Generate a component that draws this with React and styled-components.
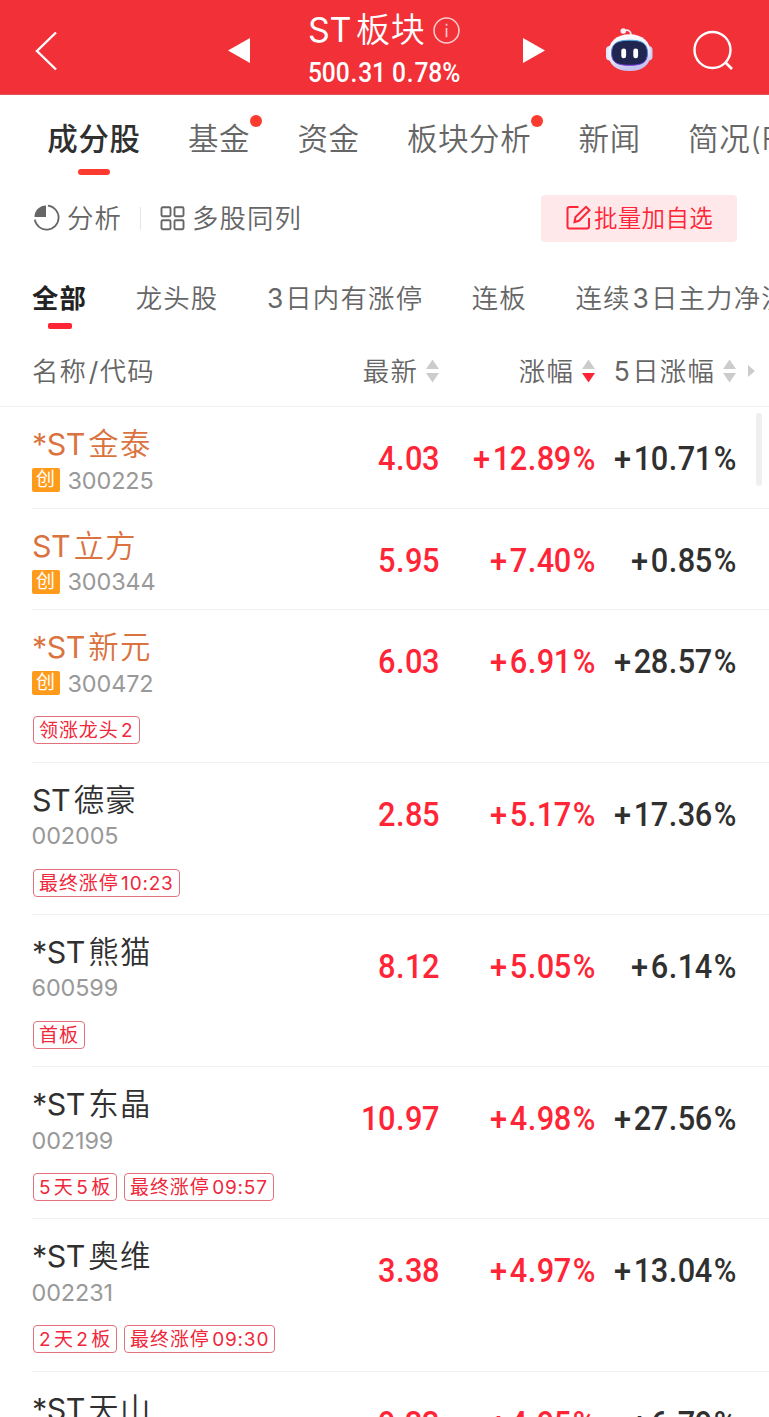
import React from 'react';
import styled, { createGlobalStyle, css } from 'styled-components';

const GlobalStyle = createGlobalStyle`
  * {
    box-sizing: border-box;
  }

  body {
    margin: 0;
    background: #fff;
  }
`;

const Page = styled.div`
  display: flex;
  flex-direction: column;
  width: 769px;
  height: 1417px;
  overflow: hidden;
  background: #fff;
  color: #666;
  font-family: Inter, 'Noto Sans CJK SC', sans-serif;
  font-weight: 350;
  white-space: nowrap;
`;

const Header = styled.header`
  display: grid;
  grid-template-columns: 228px 80px 153px 61px 84px 87px 1fr;
  align-items: center;
  flex: none;
  height: 95px;
  background: #f23038;
  border-bottom: 1px solid #d9565b;
  color: #fff;

  svg {
    display: block;
    overflow: visible;
  }
`;

const BackButton = styled.div`
  padding-left: 34px;
  padding-top: 7px;
`;

const IconSlot = styled.div`
  padding-top: ${({ $top }) => $top || 0}px;
`;

const TitleBlock = styled.div`
  display: flex;
  flex-direction: column;
  height: 94px;
  padding-top: 9px;
`;

const Title = styled.div`
  display: flex;
  align-items: center;
  height: 42px;
  font-size: 34px;
  line-height: 40px;
  letter-spacing: 0.8px;
`;

const InfoIcon = styled.svg`
  margin-left: 7px;
  opacity: 0.75;
`;

const IndexLine = styled.div`
  height: 42px;
  font-family: Roboto, sans-serif;
  font-size: 27px;
  font-weight: 500;
  line-height: 44px;
  letter-spacing: -0.1px;
  transform: scaleX(0.91);
  transform-origin: left center;
`;

const Run = styled.span`
  font-weight: 400;
  letter-spacing: ${({ $spacing }) => $spacing || 0}px;
  margin-left: ${({ $left }) => $left || 0}px;
  margin-right: ${({ $right }) => $right || 0}px;
`;

const Tabs = styled.nav`
  display: flex;
  flex: none;
  gap: 47.3px;
  height: 93px;
  padding-left: 47.3px;
`;

const Tab = styled.div`
  position: relative;
  flex: none;
  height: 82px;
  font-size: 30.5px;
  line-height: 87px;
  letter-spacing: 0.6px;
  color: ${({ $active }) => ($active ? '#303030' : '#666')};
  font-weight: ${({ $active }) => ($active ? 500 : 350)};

  ${({ $active }) => $active && css`
    &::after {
      content: '';
      position: absolute;
      left: 30.7px;
      bottom: 2px;
      width: 32px;
      height: 6px;
      border-radius: 3px;
      background: #fc3b30;
    }
  `}
`;

const Dot = styled.i`
  position: absolute;
  top: 20px;
  right: -12px;
  width: 12px;
  height: 12px;
  border-radius: 50%;
  background: #fc3b30;
`;

const Tools = styled.div`
  display: flex;
  align-items: center;
  flex: none;
  height: 60px;
  padding: 0 32px 0 33px;
  font-size: 26.4px;
  letter-spacing: 1.1px;

  svg {
    display: block;
    flex: none;
  }
`;

const Tool = styled.div`
  display: flex;
  align-items: center;
  gap: 6px;
`;

const ToolLabel = styled.span`
  margin-top: -4px;
`;

const Divider = styled.div`
  width: 1px;
  height: 23px;
  margin: 0 19px 0 18px;
  background: #e6e6e6;
`;

const BatchButton = styled.div`
  display: flex;
  align-items: center;
  gap: 3px;
  width: 196px;
  height: 47px;
  margin-left: auto;
  padding-left: 25px;
  padding-bottom: 2px;
  border-radius: 4px;
  background: #ffe8ea;
  color: #ff2436;
  font-size: 23.5px;
  letter-spacing: 0.3px;
`;

const Filters = styled.div`
  display: flex;
  flex: none;
  gap: 48.5px;
  height: 88px;
  padding-left: 32px;
`;

const Filter = styled.div`
  position: relative;
  flex: none;
  height: 81px;
  font-size: 26.4px;
  line-height: 101px;
  letter-spacing: 1.2px;
  color: ${({ $active }) => ($active ? '#222' : '#666')};
  font-weight: ${({ $active }) => ($active ? 700 : 350)};

  ${({ $active }) => $active && css`
    &::after {
      content: '';
      position: absolute;
      left: 16px;
      bottom: 0;
      width: 24px;
      height: 6px;
      border-radius: 2px;
      background: #ff2436;
    }
  `}
`;

const columns = css`
  display: grid;
  grid-template-columns: 1fr 160px 156px 141px;
`;

const TableHead = styled.div`
  ${columns}
  flex: none;
  align-items: center;
  height: 71px;
  padding: 0 33px 0 32px;
  border-bottom: 1px solid #f2f2f2;
  font-size: 26.4px;
  letter-spacing: 1.2px;
`;

const HeadCell = styled.div`
  display: flex;
  align-items: center;
  justify-content: ${({ $first }) => ($first ? 'flex-start' : 'flex-end')};
  gap: 8px;
  position: relative;
`;

const HeadLabel = styled.span`
  margin-top: -4px;
`;

const MoreArrow = styled.svg`
  position: absolute;
  right: -19px;
`;

const List = styled.div`
  position: relative;
  flex: none;
`;

const ScrollBar = styled.div`
  position: absolute;
  top: 6px;
  right: 7px;
  width: 6px;
  height: 73px;
  border-radius: 3px;
  background: #efefef;
`;

const Row = styled.div`
  ${columns}
  height: ${({ $tall }) => ($tall ? 152.3 : 101.65)}px;
  margin-left: 32px;
  padding-right: 33px;
  border-bottom: 1px solid #f2f2f2;
`;

const NameCell = styled.div`
  padding-top: 17px;
`;

const StockName = styled.div`
  height: 40px;
  font-size: 30.4px;
  line-height: 41px;
  letter-spacing: 1.2px;
  color: ${({ $growth }) => ($growth ? '#da7340' : '#303030')};
`;

const CodeLine = styled.div`
  display: flex;
  align-items: center;
  gap: 8px;
  height: 32px;
  margin-left: -0.5px;
  color: #999;
  font-size: 23.4px;
  font-weight: 400;
  letter-spacing: -0.1px;
`;

const Board = styled.span`
  width: 28px;
  height: 24px;
  border-radius: 2px;
  background: #ff9b1a;
  color: #fff;
  font-size: 19px;
  line-height: 24px;
  text-align: center;
`;

const Tags = styled.div`
  display: flex;
  gap: 7px;
  margin: 17px 0 0 1px;
`;

const Tag = styled.span`
  height: 28px;
  padding: 0 5px;
  border: 1px solid #e2707d;
  border-radius: 4px;
  color: #f0283c;
  font-size: 19px;
  font-weight: 400;
  line-height: 28px;
  letter-spacing: 0.9px;
`;

const Value = styled.div`
  padding-top: 26px;
  font-family: Roboto, sans-serif;
  font-size: 33.8px;
  font-weight: 500;
  line-height: 52px;
  letter-spacing: -0.5px;
  text-align: right;
  color: ${({ $up }) => ($up ? '#ff2436' : '#303030')};
  transform: scaleX(0.91);
  transform-origin: right center;
`;

const Symbol = styled.span`
  padding: 0 ${({ $right }) => $right || 0}px 0 ${({ $left }) => $left || 0}px;
`;

const tabs = [
  { label: '成分股', active: true },
  { label: '基金', dot: true },
  { label: '资金' },
  { label: '板块分析', dot: true },
  { label: '新闻' },
  { label: '简况(F10)' },
];

const filters = ['全部', '龙头股', '3日内有涨停', '连板', '连续3日主力净流入'];

const stocks = [
  { name: '*ST金泰', code: '300225', growth: true, price: '4.03', change: '+12.89%', change5: '+10.71%' },
  { name: 'ST立方', code: '300344', growth: true, price: '5.95', change: '+7.40%', change5: '+0.85%' },
  { name: '*ST新元', code: '300472', growth: true, price: '6.03', change: '+6.91%', change5: '+28.57%', tags: ['领涨龙头2'] },
  { name: 'ST德豪', code: '002005', price: '2.85', change: '+5.17%', change5: '+17.36%', tags: ['最终涨停10:23'] },
  { name: '*ST熊猫', code: '600599', price: '8.12', change: '+5.05%', change5: '+6.14%', tags: ['首板'] },
  { name: '*ST东晶', code: '002199', price: '10.97', change: '+4.98%', change5: '+27.56%', tags: ['5天5板', '最终涨停09:57'] },
  { name: '*ST奥维', code: '002231', price: '3.38', change: '+4.97%', change5: '+13.04%', tags: ['2天2板', '最终涨停09:30'] },
  { name: '*ST天山', code: '300313', price: '9.33', change: '+4.95%', change5: '+6.79%', tags: ['首板'] },
];

// Puts a small gap between latin and chinese runs
const MixedText = ({ text, gap = 3, spacing = 0 }) => {
  const runs = text.match(/[\x20-\x7e]+|[^\x20-\x7e]+/g);
  return runs.map((run, i) => {
    const latin = /^[\x20-\x7e]/.test(run);
    if (!latin) return <span key={i}>{run}</span>;
    return (
      <Run
        key={i}
        $spacing={spacing}
        $left={i > 0 ? gap : 0}
        $right={i < runs.length - 1 ? gap : 0}
      >
        {run}
      </Run>
    );
  });
};

const symbolSpace = {
  '+': { $right: 3.5 },
  '.': { $left: 1, $right: 1 },
  '%': { $left: 2.2 },
};

// Digits sit tight, the signs around them get some air
const Figure = ({ value }) => value.split(/([+.%])/).filter(Boolean).map((part, i) => (
  symbolSpace[part]
    ? <Symbol key={i} {...symbolSpace[part]}>{part}</Symbol>
    : part
));

const SortIcon = ({ desc }) => (
  <svg width="13" height="24" viewBox="0 0 13 24">
    <path d="M6.500 0.500L13 10H0z" fill="#ccc" />
    <path d="M0 14h13L6.500 23.500z" fill={desc ? '#ff2436' : '#ccc'} />
  </svg>
);

const RobotIcon = () => (
  <svg width="48" height="46" viewBox="0 0 48 46">
    <defs>
      <linearGradient id="shell" x1="0" y1="0" x2="0.3" y2="1">
        <stop offset="0" stopColor="#fff" />
        <stop offset="0.6" stopColor="#efeffc" />
        <stop offset="1" stopColor="#c3c3ee" />
      </linearGradient>
      <linearGradient id="rim" x1="0" y1="0" x2="0" y2="1">
        <stop offset="0" stopColor="#4aa5e8" />
        <stop offset="1" stopColor="#7a3ce0" />
      </linearGradient>
    </defs>
    <path d="M18 4.500c4-1 7 0 7 4.500" fill="none" stroke="#f3e6f2" strokeWidth="1.800" />
    <circle cx="17.300" cy="5" r="2.800" fill="#f7eef6" />
    <rect x="0" y="20" width="8" height="14.500" rx="4" fill="#e4e4fa" />
    <rect x="38.500" y="20" width="8" height="14.500" rx="4" fill="#d0d0f4" />
    <path d="M23.500 8.300C36.500 8.300 44.700 16 44.700 27.500S36.500 45 23.500 45 2.300 39 2.300 27.500 10.500 8.300 23.500 8.300z" fill="url(#shell)" />
    <path d="M23.500 14.200c12.500 0 18 3 18 12.800s-5.500 12.300-18 12.300-18-2.800-18-12.300 5.500-12.800 18-12.800z" fill="#20264f" stroke="url(#rim)" strokeWidth="1" />
    <rect x="15.300" y="22.500" width="4.800" height="9.800" rx="2.300" fill="#fff" />
    <rect x="27.300" y="22.500" width="4.800" height="9.800" rx="2.300" fill="#fff" />
  </svg>
);

const App = () => (
  <>
    <GlobalStyle />
    <Page>
      <Header>
        <BackButton>
          <svg width="24" height="40" viewBox="0 0 24 40">
            <path d="M22 1.500L3 20l19 18.500" fill="none" stroke="#fff" strokeWidth="2.400" />
          </svg>
        </BackButton>
        <IconSlot $top={6}>
          <svg width="22" height="25" viewBox="0 0 22 25">
            <path d="M22 0v25L0 12.500z" fill="#fff" />
          </svg>
        </IconSlot>
        <TitleBlock>
          <Title>
            <MixedText text="ST板块" gap={5} spacing={-0.4} />
            <InfoIcon width="27" height="27" viewBox="0 0 26 26">
              <circle cx="13" cy="13" r="12" fill="none" stroke="#fff" strokeWidth="1.500" />
              <path d="M13 10.500v9M13 6.500v2" stroke="#fff" strokeWidth="1.600" />
            </InfoIcon>
          </Title>
          <IndexLine>
            500<Symbol $left={1} $right={1}>.</Symbol>31 0<Symbol $left={1} $right={1}>.</Symbol>78%
          </IndexLine>
        </TitleBlock>
        <IconSlot $top={6}>
          <svg width="84" height="25" viewBox="0 0 84 25">
            <path d="M62 0v25l22-12.500z" fill="#fff" />
          </svg>
        </IconSlot>
        <IconSlot />
        <IconSlot $top={4}>
          <RobotIcon />
        </IconSlot>
        <IconSlot $top={7}>
          <svg width="42" height="42" viewBox="0 0 42 42">
            <circle cx="19.500" cy="20" r="18" fill="none" stroke="#fff" strokeWidth="2.400" />
            <path d="M32 32l7 7" stroke="#fff" strokeWidth="2.600" />
          </svg>
        </IconSlot>
      </Header>

      <Tabs>
        {tabs.map((tab) => (
          <Tab key={tab.label} $active={tab.active}>
            {tab.label}
            {tab.dot && <Dot />}
          </Tab>
        ))}
      </Tabs>

      <Tools>
        <Tool>
          <svg width="28" height="28" viewBox="0 0 28 28">
            <path d="M13 1.500V13H1.500A11.500 11.500 0 0 1 13 1.500z" fill="#666" />
            <path d="M15 1.700a12 12 0 1 1-13.200 14" fill="none" stroke="#666" strokeWidth="1.800" />
          </svg>
          <ToolLabel>分析</ToolLabel>
        </Tool>
        <Divider />
        <Tool>
          <svg width="26" height="25" viewBox="0 0 26 25" fill="none" stroke="#666" strokeWidth="1.900">
            <rect x="1.500" y="1.200" width="9" height="9" rx="1.200" />
            <rect x="14.500" y="1.200" width="9" height="9" rx="1.200" />
            <rect x="1.500" y="14.200" width="9" height="9" rx="1.200" />
            <rect x="14.500" y="14.200" width="9" height="9" rx="1.200" />
          </svg>
          <ToolLabel>多股同列</ToolLabel>
        </Tool>
        <BatchButton>
          <svg width="25" height="25" viewBox="0 0 25 25" fill="none" stroke="#ff2436" strokeWidth="2">
            <path d="M12.500 2H3.500Q1.500 2 1.500 4V21.500Q1.500 23.500 3.500 23.500H21Q23 23.500 23 21.500V13" />
            <path d="M8.500 17l1-5L20 1.800l3.500 3.500L13 15.800z" />
          </svg>
          批量加自选
        </BatchButton>
      </Tools>

      <Filters>
        {filters.map((label, i) => (
          <Filter key={label} $active={i === 0}>
            <MixedText text={label} gap={2} />
          </Filter>
        ))}
      </Filters>

      <TableHead>
        <HeadCell $first>
          <HeadLabel><MixedText text="名称/代码" gap={1.5} /></HeadLabel>
        </HeadCell>
        <HeadCell>
          <HeadLabel>最新</HeadLabel>
          <SortIcon />
        </HeadCell>
        <HeadCell>
          <HeadLabel>涨幅</HeadLabel>
          <SortIcon desc />
        </HeadCell>
        <HeadCell>
          <HeadLabel><MixedText text="5日涨幅" gap={2.5} /></HeadLabel>
          <SortIcon />
          <MoreArrow width="7" height="12" viewBox="0 0 7 12">
            <path d="M0 0l7 6-7 6z" fill="#ccc" />
          </MoreArrow>
        </HeadCell>
      </TableHead>

      <List>
        <ScrollBar />
        {stocks.map((stock) => (
          <Row key={stock.code} $tall={!!stock.tags}>
            <NameCell>
              <StockName $growth={stock.growth}>
                <MixedText text={stock.name} gap={3.5} spacing={-0.5} />
              </StockName>
              <CodeLine>
                {stock.growth && <Board>创</Board>}
                {stock.code}
              </CodeLine>
              {stock.tags && (
                <Tags>
                  {stock.tags.map((tag) => (
                    <Tag key={tag}><MixedText text={tag} gap={2.5} spacing={0.8} /></Tag>
                  ))}
                </Tags>
              )}
            </NameCell>
            <Value $up><Figure value={stock.price} /></Value>
            <Value $up><Figure value={stock.change} /></Value>
            <Value><Figure value={stock.change5} /></Value>
          </Row>
        ))}
      </List>
    </Page>
  </>
);

export default App;
